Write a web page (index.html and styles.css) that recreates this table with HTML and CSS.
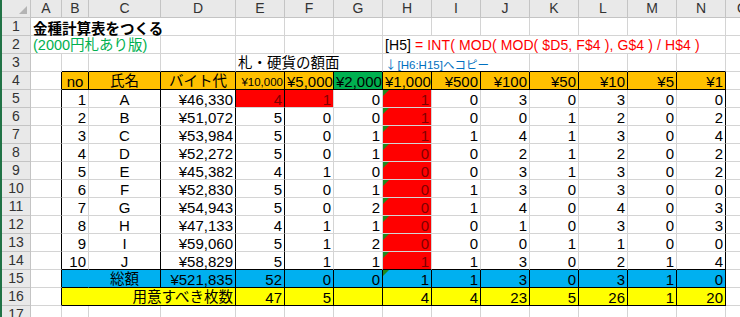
FILE: index.html
```html
<!DOCTYPE html>
<html lang="ja">
<head>
<meta charset="utf-8">
<title>金種計算表</title>
<link rel="stylesheet" href="styles.css">
</head>
<body>
<div class="sheet">
  <!-- column headers -->
  <div class="h corner"><svg class="sel" width="10" height="10" viewBox="0 0 10 10"><polygon points="9,1 9,9 1,9" fill="#b4b4b4"/></svg></div>
  <div class="h">A</div><div class="h">B</div><div class="h">C</div><div class="h">D</div><div class="h">E</div><div class="h">F</div><div class="h">G</div><div class="h">H</div><div class="h">I</div><div class="h">J</div><div class="h">K</div><div class="h">L</div><div class="h">M</div><div class="h">N</div><div class="h">O</div>

  <!-- row 1 -->
  <div class="h rn">1</div>
  <div class="c sp4 title">金種計算表をつくる</div>
  <div class="c"></div><div class="c"></div><div class="c"></div><div class="c"></div><div class="c"></div><div class="c"></div><div class="c"></div><div class="c"></div><div class="c"></div><div class="c"></div><div class="c"></div>

  <!-- row 2 -->
  <div class="h rn">2</div>
  <div class="c sp3 sub">(2000円札あり版)</div>
  <div class="c"></div><div class="c"></div><div class="c"></div><div class="c"></div>
  <div class="c sp7 fx"><span class="k">[H5]</span> = INT( MOD( MOD( $D5, F$4 ), G$4 ) / H$4 )</div>
  <div class="c"></div>

  <!-- row 3 -->
  <div class="h rn">3</div>
  <div class="c"></div><div class="c bb"></div><div class="c bb"></div><div class="c bb"></div>
  <div class="c sp3 bb jp">札・硬貨の額面</div>
  <div class="c sp3 bb note"><span class="arr">↓</span>[H6:H15]へコピー</div>
  <div class="c bb"></div><div class="c bb"></div><div class="c bb"></div><div class="c bb"></div>
  <div class="c"></div>

  <!-- row 4 -->
  <div class="h rn">4</div>
  <div class="c br"></div>
  <div class="c or br bb ctr">no</div>
  <div class="c or br bb ctr jp">氏名</div>
  <div class="c or br bb ctr jp">バイト代</div>
  <div class="c or br bb r sm">¥10,000</div>
  <div class="c or br bb r">¥5,000</div>
  <div class="c gr br bb r">¥2,000</div>
  <div class="c or br bb r">¥1,000</div>
  <div class="c or br bb r">¥500</div>
  <div class="c or br bb r">¥100</div>
  <div class="c or br bb r">¥50</div>
  <div class="c or br bb r">¥10</div>
  <div class="c or br bb r">¥5</div>
  <div class="c or br bb r">¥1</div>
  <div class="c"></div>

  <!-- row 5 -->
  <div class="h rn">5</div>
  <div class="c br"></div><div class="c r">1</div><div class="c ctr br">A</div><div class="c r br">¥46,330</div>
  <div class="c r br rd">4</div><div class="c r rd">1</div><div class="c r">0</div><div class="c r rd t">1</div>
  <div class="c r">0</div><div class="c r">3</div><div class="c r">0</div><div class="c r">3</div><div class="c r">0</div><div class="c r br">0</div>
  <div class="c"></div>

  <!-- row 6 -->
  <div class="h rn">6</div>
  <div class="c br"></div><div class="c r">2</div><div class="c ctr br">B</div><div class="c r br">¥51,072</div>
  <div class="c r br">5</div><div class="c r">0</div><div class="c r">0</div><div class="c r rd t">1</div>
  <div class="c r">0</div><div class="c r">0</div><div class="c r">1</div><div class="c r">2</div><div class="c r">0</div><div class="c r br">2</div>
  <div class="c"></div>

  <!-- row 7 -->
  <div class="h rn">7</div>
  <div class="c br"></div><div class="c r">3</div><div class="c ctr br">C</div><div class="c r br">¥53,984</div>
  <div class="c r br">5</div><div class="c r">0</div><div class="c r">1</div><div class="c r rd t">1</div>
  <div class="c r">1</div><div class="c r">4</div><div class="c r">1</div><div class="c r">3</div><div class="c r">0</div><div class="c r br">4</div>
  <div class="c"></div>

  <!-- row 8 -->
  <div class="h rn">8</div>
  <div class="c br"></div><div class="c r">4</div><div class="c ctr br">D</div><div class="c r br">¥52,272</div>
  <div class="c r br">5</div><div class="c r">0</div><div class="c r">1</div><div class="c r rd t">0</div>
  <div class="c r">0</div><div class="c r">2</div><div class="c r">1</div><div class="c r">2</div><div class="c r">0</div><div class="c r br">2</div>
  <div class="c"></div>

  <!-- row 9 -->
  <div class="h rn">9</div>
  <div class="c br"></div><div class="c r">5</div><div class="c ctr br">E</div><div class="c r br">¥45,382</div>
  <div class="c r br">4</div><div class="c r">1</div><div class="c r">0</div><div class="c r rd t">0</div>
  <div class="c r">0</div><div class="c r">3</div><div class="c r">1</div><div class="c r">3</div><div class="c r">0</div><div class="c r br">2</div>
  <div class="c"></div>

  <!-- row 10 -->
  <div class="h rn">10</div>
  <div class="c br"></div><div class="c r">6</div><div class="c ctr br">F</div><div class="c r br">¥52,830</div>
  <div class="c r br">5</div><div class="c r">0</div><div class="c r">1</div><div class="c r rd t">0</div>
  <div class="c r">1</div><div class="c r">3</div><div class="c r">0</div><div class="c r">3</div><div class="c r">0</div><div class="c r br">0</div>
  <div class="c"></div>

  <!-- row 11 -->
  <div class="h rn">11</div>
  <div class="c br"></div><div class="c r">7</div><div class="c ctr br">G</div><div class="c r br">¥54,943</div>
  <div class="c r br">5</div><div class="c r">0</div><div class="c r">2</div><div class="c r rd t">0</div>
  <div class="c r">1</div><div class="c r">4</div><div class="c r">0</div><div class="c r">4</div><div class="c r">0</div><div class="c r br">3</div>
  <div class="c"></div>

  <!-- row 12 -->
  <div class="h rn">12</div>
  <div class="c br"></div><div class="c r">8</div><div class="c ctr br">H</div><div class="c r br">¥47,133</div>
  <div class="c r br">4</div><div class="c r">1</div><div class="c r">1</div><div class="c r rd t">0</div>
  <div class="c r">0</div><div class="c r">1</div><div class="c r">0</div><div class="c r">3</div><div class="c r">0</div><div class="c r br">3</div>
  <div class="c"></div>

  <!-- row 13 -->
  <div class="h rn">13</div>
  <div class="c br"></div><div class="c r">9</div><div class="c ctr br">I</div><div class="c r br">¥59,060</div>
  <div class="c r br">5</div><div class="c r">1</div><div class="c r">2</div><div class="c r rd t">0</div>
  <div class="c r">0</div><div class="c r">0</div><div class="c r">1</div><div class="c r">1</div><div class="c r">0</div><div class="c r br">0</div>
  <div class="c"></div>

  <!-- row 14 -->
  <div class="h rn">14</div>
  <div class="c br"></div><div class="c r bb">10</div><div class="c ctr br bb">J</div><div class="c r br bb">¥58,829</div>
  <div class="c r br bb">5</div><div class="c r bb">1</div><div class="c r bb">1</div><div class="c r rd t bb">1</div>
  <div class="c r bb">1</div><div class="c r bb">3</div><div class="c r bb">0</div><div class="c r bb">2</div><div class="c r bb">1</div><div class="c r br bb">4</div>
  <div class="c"></div>

  <!-- row 15 -->
  <div class="h rn">15</div>
  <div class="c br"></div>
  <div class="c bl bb nob"></div>
  <div class="c bl br bb ctr jp">総額</div>
  <div class="c bl br bb r">¥521,835</div>
  <div class="c bl br bb r">52</div><div class="c bl br bb r">0</div><div class="c bl br bb r">0</div><div class="c bl br bb r t">1</div>
  <div class="c bl br bb r">1</div><div class="c bl br bb r">3</div><div class="c bl br bb r">0</div><div class="c bl br bb r">3</div><div class="c bl br bb r">1</div><div class="c bl br bb r">0</div>
  <div class="c"></div>

  <!-- row 16 -->
  <div class="h rn">16</div>
  <div class="c br"></div>
  <div class="c sp3 ye br bb r jp">用意すべき枚数</div>
  <div class="c ye br bb r">47</div><div class="c ye br bb r">5</div><div class="c ye br bb r"></div><div class="c ye br bb r">4</div>
  <div class="c ye br bb r">4</div><div class="c ye br bb r">23</div><div class="c ye br bb r">5</div><div class="c ye br bb r">26</div><div class="c ye br bb r">1</div><div class="c ye br bb r">20</div>
  <div class="c"></div>

  <!-- row 17 -->
  <div class="h rn">17</div>
  <div class="c"></div><div class="c"></div><div class="c"></div><div class="c"></div><div class="c"></div><div class="c"></div><div class="c"></div><div class="c"></div><div class="c"></div><div class="c"></div><div class="c"></div><div class="c"></div><div class="c"></div><div class="c"></div><div class="c"></div>
</div>
</body>
</html>
```

FILE: styles.css
```css
html, body {
  margin: 0;
  padding: 0;
  background: #fff;
  overflow: hidden;
}

.sheet {
  display: grid;
  grid-template-columns: 29px 31px 27px 72px 75px repeat(10, 49px) 34px;
  grid-template-rows: repeat(18, 18px);
  width: max-content;
  border-left: 2px solid #217346;
  font-family: "Liberation Sans", "Noto Sans CJK JP", sans-serif;
}

.h {
  box-sizing: border-box;
  background: #e9e9e9;
  border-right: 1px solid #c4c4c4;
  border-bottom: 1px solid #c4c4c4;
  font-size: 14px;
  line-height: 17px;
  text-align: center;
  color: #333;
  overflow: hidden;
}

.corner {
  display: flex;
  align-items: flex-end;
  justify-content: flex-end;
  padding: 0 2px 2px 0;
}

.sel { display: block; }

.c {
  box-sizing: border-box;
  border-right: 1px solid #d4d4d4;
  border-bottom: 1px solid #d4d4d4;
  font-size: 15px;
  line-height: 17px;
  padding: 1px 2px 0;
  white-space: nowrap;
  overflow: hidden;
  color: #000;
}

.sp3 { grid-column: span 3; }
.sp4 { grid-column: span 4; }
.sp7 { grid-column: span 7; }

.br { border-right-color: #000; }
.bb { border-bottom-color: #000; }
.nob { border-right-color: transparent; }

.r { text-align: right; }
.ctr { text-align: center; }

.jp { font-size: 14.5px; }

.title {
  font-family: "Noto Sans CJK JP", sans-serif;
  font-size: 14.5px;
  font-weight: 700;
  overflow: visible;
}

.sub {
  font-size: 14.5px;
  color: #00b050;
}

.fx {
  font-size: 14px;
  letter-spacing: 0.1px;
  color: #ff0000;
}
.fx .k { color: #000; }

.note {
  font-size: 11.5px;
  padding-top: 2px;
  color: #0070c0;
  overflow: visible;
}
.note .arr {
  font-family: "Noto Sans CJK JP", sans-serif;
  margin-right: 1px;
}

.sm {
  font-size: 11.5px;
  padding-top: 2px;
  padding-right: 1px;
}

.or { background: #ffc000; }
.gr { background: #00b050; }
.rd { background: #ff0000; color: #800000; }
.bl { background: #00b0f0; }
.ye { background: #ffff00; }

.t { position: relative; }
.t::before {
  content: "";
  position: absolute;
  left: 0;
  top: 0;
  width: 0;
  height: 0;
  border-top: 6px solid #1e8a1e;
  border-right: 6px solid transparent;
}
```
